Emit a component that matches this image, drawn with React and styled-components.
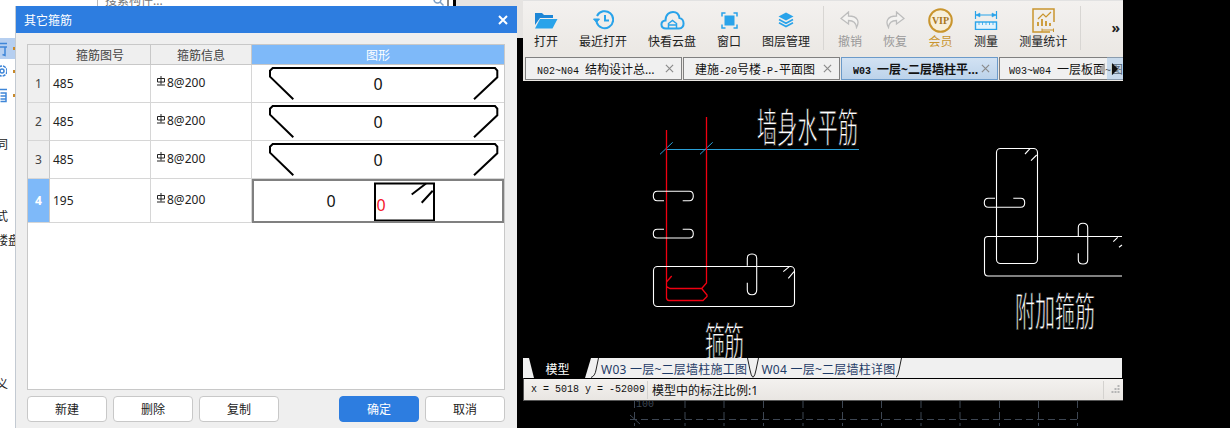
import React from 'react'
import styled, { createGlobalStyle } from 'styled-components'

const SANS = '"Noto Sans", "Noto Sans CJK SC", sans-serif'
const MONO = '"Liberation Mono", "Noto Sans CJK SC", monospace'
const BLUE = '#2d7de0'
const SKY = '#7eb9f9'
const ICON = '#29a3ea'
const GOLD = '#c9952e'

const GlobalStyle = createGlobalStyle`
  html, body {
    margin: 0;
    background: #000;
    overflow: hidden;
  }
  * {
    box-sizing: border-box;
  }
`

const Screen = styled.div`
  display: flex;
  width: 1230px;
  height: 428px;
  overflow: hidden;
  background: #000;
  font-family: ${SANS};
  font-size: 12px;
  color: #222;
`

/* left application behind the dialog */
const LeftPane = styled.div`
  position: relative;
  display: flex;
  flex: none;
  width: 523px;
  height: 428px;
`

const BackWindow = styled.div`
  width: 453px;
  height: 428px;
  margin-right: 3px;
  background: #fff;
  overflow: hidden;
`

const SearchRow = styled.div`
  height: 38px;
  padding-left: 97px;
  overflow: hidden;
`

const SearchBox = styled.div`
  display: flex;
  align-items: center;
  justify-content: space-between;
  width: 352px;
  height: 16px;
  margin-top: -8px;
  padding: 0 3px 0 7px;
  border: 1px solid #b9b9b9;
  border-right: 2px solid #888;
  color: #777;
`

const SideRow = styled.div`
  display: flex;
  align-items: center;
  gap: 6px;
  width: 15px;
  height: ${p => p.$h}px;
  overflow: hidden;
  background: ${p => (p.$active ? '#b6cff0' : 'transparent')};
`

const SideIcon = styled.svg`
  flex: none;
  margin-left: -9px;
`

const SideMark = styled.span`
  flex: none;
  width: 2px;
  height: 3px;
  background: #c98a2b;
`

const SideText = styled.span`
  flex: none;
  margin-left: -4px;
  color: #222;
`

const GrayStub = styled.div`
  width: 67px;
  height: 38px;
  background: #e6e4e2;
`

/* dialog */
const Dialog = styled.section`
  position: absolute;
  left: 15px;
  top: 6px;
  display: flex;
  flex-direction: column;
  width: 502px;
  height: 430px;
  border-left: 1px solid #c3cad2;
  background: #efefef;
`

const TitleBar = styled.header`
  display: flex;
  align-items: center;
  justify-content: space-between;
  flex: none;
  height: 27px;
  padding: 0 9px 0 8px;
  background: ${BLUE};
  color: #fff;
`

const DialogBody = styled.div`
  display: flex;
  flex-direction: column;
  gap: 6px;
  padding: 11px 12px 0 11px;
`

const Table = styled.div`
  width: 478px;
  height: 346px;
  border: 1px solid #c8c8c8;
  background: #fff;
`

const Row = styled.div`
  display: grid;
  grid-template-columns: 22px 101px 101px 252px;
  height: ${p => p.$h}px;
`

const HeadCell = styled.div`
  display: flex;
  align-items: center;
  justify-content: center;
  border-right: 1px solid #c8c8c8;
  border-bottom: 1px solid #c8c8c8;
  background: ${p => (p.$active ? SKY : '#efefef')};
  color: ${p => (p.$active ? '#fff' : '#444')};
  &:last-child {
    border-right: 0;
  }
`

const IndexCell = styled.div`
  display: flex;
  align-items: center;
  justify-content: center;
  border-right: 1px solid #c8c8c8;
  border-bottom: 1px solid #d6d6d6;
  background: ${p => (p.$active ? SKY : '#efefef')};
  color: ${p => (p.$active ? '#fff' : '#444')};
  font-weight: ${p => (p.$active ? 700 : 400)};
`

const TextCell = styled.div`
  display: flex;
  align-items: center;
  padding: 0 3px ${p => (p.$raised ? 2 : 0)}px 3px;
  border-right: 1px solid #d6d6d6;
  border-bottom: 1px solid #d6d6d6;
  color: #222;
`

const RebarGlyph = styled.svg`
  flex: none;
  margin: -4px 1px 0 2px;
`

const ShapeCell = styled.div`
  border-bottom: 1px solid #d6d6d6;
  outline: ${p => (p.$active ? '2px solid #808080' : 'none')};
  outline-offset: -2px;
  svg {
    display: block;
  }
`

const ShapeDigit = styled.text`
  font-family: ${SANS};
  font-size: 16px;
  fill: ${p => p.$fill || '#111'};
  text-anchor: middle;
`

const ButtonRow = styled.div`
  display: flex;
  gap: 6px;
`

const DialogButton = styled.button`
  width: 80px;
  height: 26px;
  margin-left: ${p => (p.$push ? '54px' : '0')};
  padding: 0;
  border: 1px solid ${p => (p.$primary ? BLUE : '#c8c8c8')};
  border-radius: 4px;
  background: ${p => (p.$primary ? BLUE : '#fff')};
  color: ${p => (p.$primary ? '#fff' : '#222')};
  font-family: ${SANS};
  font-size: 12px;
`

/* CAD viewer on the right */
const CadColumn = styled.div`
  display: flex;
  flex-direction: column;
  flex: none;
  width: 600px;
  height: 428px;
  svg {
    display: block;
    flex: none;
  }
`

const Toolbar = styled.div`
  display: flex;
  align-items: flex-start;
  gap: 21px;
  flex: none;
  height: 55px;
  padding: 5px 0 0 11px;
  border-top: 1px solid #e2e2e2;
  background: linear-gradient(#f3f1ef, #ebe8e4);
`

const ToolItem = styled.div`
  display: flex;
  flex-direction: column;
  align-items: center;
  color: ${p => p.$color || '#222'};
  white-space: nowrap;
`

const ToolIcon = styled.div`
  display: flex;
  align-items: center;
  justify-content: center;
  height: 28px;
`

const ToolLabel = styled.span`
  line-height: 16px;
`

const ToolDivider = styled.div`
  flex: none;
  width: 1px;
  height: 44px;
  margin: 0 -7px 0 -8px;
  background: #d8d6d3;
`

const MoreButton = styled.div`
  margin: 14px 3px 0 auto;
  font-size: 14px;
  font-weight: 700;
  line-height: 16px;
`

const TabStrip = styled.div`
  position: relative;
  display: flex;
  gap: 1px;
  flex: none;
  height: 26px;
  padding: 2px 0 1px 2px;
  background: #ebe8e4;
`

const DocTab = styled.div`
  display: flex;
  align-items: center;
  justify-content: space-between;
  flex: ${p => (p.$fill ? '1' : 'none')};
  width: ${p => (p.$fill ? 'auto' : '157px')};
  min-width: 0;
  padding: ${p => (p.$fill ? '0 0 0 9px' : '0 7px 0 11px')};
  border: 1px solid ${p => (p.$active ? '#6b9ac9' : '#808080')};
  border-width: ${p => (p.$fill ? '1px 0 1px 1px' : '1px')};
  background: ${p => (p.$active ? 'linear-gradient(#d2e2f3, #bcd3ea)' : '#f0f0f0')};
  font-weight: ${p => (p.$active ? 700 : 400)};
  overflow: hidden;
`

const DocTitle = styled.span`
  overflow: hidden;
  white-space: nowrap;
  color: #111;
`

const Latin = styled.span`
  font-family: ${MONO};
  font-size: 10px;
`

const TabClose = styled.svg`
  flex: none;
  color: #8a8a8a;
`

const ScrollArrow = styled.div`
  position: absolute;
  top: 2px;
  bottom: 1px;
  right: ${p => p.$right}px;
  width: ${p => p.$width}px;
  display: flex;
  align-items: center;
  justify-content: center;
  background: ${p => p.$bg || 'transparent'};
`

const Triangle = styled.i`
  display: block;
  width: 0;
  height: 0;
  border-top: 6px solid transparent;
  border-bottom: 6px solid transparent;
  border-left: ${p => (p.$dir === 'right' ? '6px solid #111' : '0')};
  border-right: ${p => (p.$dir === 'left' ? '6px solid #aaa' : '0')};
`

const SheetStrip = styled.div`
  display: flex;
  align-items: stretch;
  flex: none;
  width: 599px;
  height: 20px;
  background: #f0f0f0;
`

const ModelTab = styled.div`
  display: flex;
  align-items: center;
  justify-content: center;
  width: 67px;
  margin-left: 1px;
  padding-top: 1px;
  background: #000;
  color: #fff;
  clip-path: polygon(5px 0, 100% 0, calc(100% - 6px) 100%, 10px 100%);
`

const SheetTab = styled.div`
  display: flex;
  align-items: center;
  padding: 1px 0 0 2px;
  color: #1e3a66;
  letter-spacing: 0.25px;
  white-space: nowrap;
`

const SheetSlantIcon = styled.svg`
  transform: ${p => (p.$mirror ? 'scaleX(-1)' : 'none')};
`

const StatusBar = styled.div`
  display: flex;
  align-items: center;
  flex: none;
  height: 23px;
  padding: 0 3px 0 7px;
  border-top: 1px solid #000;
  border-bottom: 1px solid #555;
  border-left: 1px solid #555;
  background: linear-gradient(#f3f1ef, #e9e6e2);
  color: #111;
`

const Coordinates = styled.span`
  width: 116px;
  font-family: ${MONO};
  font-size: 10px;
  white-space: nowrap;
`

const StatusDivider = styled.div`
  flex: none;
  width: 1px;
  height: 18px;
  margin-right: ${p => p.$mr}px;
  background: #d4d2cf;
`

const StatusText = styled.span`
  flex: 1;
  white-space: nowrap;
`

/* black stroke painted over the white fill thins the glyphs to the CAD line weight */
const CadText = styled.text`
  font-family: "Noto Sans CJK SC", sans-serif;
  font-size: 20px;
  fill: #fff;
  stroke: #000;
  stroke-width: 0.45px;
`

const HOOK_ROWS = ['485', '485', '485']

function HookShape() {
  return (
    <path
      d="M41.3 34.3L18 11.7V5.7L20.7 3H243L245.3 5.7V12.3L222 34.3"
      fill="none"
      stroke="#000"
      strokeWidth="2"
    />
  )
}

function RebarSymbol() {
  return (
    <RebarGlyph width="10" height="10" viewBox="0 0 10 10" fill="none" stroke="#222" strokeWidth="1">
      <path d="M1.5 2.5H8.5V6H1.5ZM5 0V8.5M1 9H9" />
    </RebarGlyph>
  )
}

function CloseIcon({ size = 9, width = 1.3, color = 'currentColor' }) {
  return (
    <TabClose width={size} height={size} viewBox="0 0 10 10" stroke={color} strokeWidth={width}>
      <path d="M1 1L9 9M9 1L1 9" />
    </TabClose>
  )
}

function FolderIcon() {
  return (
    <svg width="24" height="17" viewBox="0 0 24 17">
      <path d="M1 1h7l2 2h9v3H6L1 13z" fill="#1d86d6" />
      <path d="M6 7h17.5l-5 9.5H1z" fill={ICON} />
    </svg>
  )
}

function RecentIcon() {
  return (
    <svg width="21" height="20" viewBox="0 0 21 20" fill="none" stroke={ICON} strokeWidth="2">
      <path d="M4 6A8.5 8.5 0 1 1 3.5 12" />
      <path d="M12 5V10.5H16" />
      <path d="M0.5 9H6.5L3.5 12.5Z" fill={ICON} strokeWidth="1" />
    </svg>
  )
}

function CloudIcon() {
  return (
    <svg width="25" height="19" viewBox="0 0 25 19" fill="none" stroke={ICON} strokeWidth="2">
      <path d="M6 17.5C0 17.5 0 9.5 5.5 9.5C5.5 3 10 1 13 1C16.5 1 19 3.5 19.5 7C24.5 7.5 25.5 17.5 19 17.5Z" />
      <path d="M8.5 17V12.5L12.5 9.5L16.5 12.5V17M8.5 14H16.5" strokeWidth="1.5" />
    </svg>
  )
}

function WindowIcon() {
  return (
    <svg width="17" height="17" viewBox="0 0 17 17" fill="none" stroke={ICON} strokeWidth="1.5">
      <rect x="3.5" y="3.5" width="10" height="10" fill={ICON} stroke="none" />
      <path d="M1 4.5V1H4.5M12.5 1H16V4.5M16 12.5V16H12.5M4.5 16H1V12.5" />
    </svg>
  )
}

function LayersIcon() {
  return (
    <svg width="16" height="17" viewBox="0 0 16 17">
      <path d="M8 0.5L15.5 4.5L8 8.5L0.5 4.5Z" fill={ICON} />
      <path d="M1 7.5L8 11.3L15 7.5M1 10.7L8 14.5L15 10.7" fill="none" stroke={ICON} strokeWidth="1.6" />
    </svg>
  )
}

function UndoIcon({ flip }) {
  return (
    <svg width="20" height="18" viewBox="0 0 20 18" style={flip ? { transform: 'scaleX(-1)' } : undefined}>
      <path
        d="M8.5 1L1 7.5L8.5 13V9.5C13 9.5 16 11 16.5 16.5C19.5 11 18.5 5 8.5 5Z"
        fill="#f4f3f1"
        stroke="#bdbdbd"
        strokeWidth="1.3"
      />
    </svg>
  )
}

function VipIcon() {
  return (
    <svg width="25" height="25" viewBox="0 0 25 25">
      <circle cx="12.5" cy="12.5" r="11.3" fill="#f7efd9" stroke={GOLD} strokeWidth="2" />
      <text x="12.5" y="16" textAnchor="middle" fontFamily="Liberation Serif, serif" fontSize="10" fontWeight="700" fill="#a9771c">
        VIP
      </text>
    </svg>
  )
}

function MeasureIcon() {
  return (
    <svg width="24" height="20" viewBox="0 0 24 20" fill="none" stroke={ICON}>
      <path d="M1.5 1V9M22.5 1V9M2 5H22" strokeWidth="1.2" />
      <path d="M2 5L6 3V7ZM22 5L18 3V7Z" fill={ICON} strokeWidth="0.5" />
      <rect x="1.5" y="12" width="21" height="7.5" fill="#e4f3fc" strokeWidth="1.4" />
      <path d="M5 12V15M8.5 12V15M12 12V15M15.5 12V15M19 12V15" strokeWidth="0.8" />
    </svg>
  )
}

function StatsIcon() {
  return (
    <svg width="23" height="25" viewBox="0 0 23 25" fill="none" stroke={GOLD}>
      <path d="M18 24H1V1H22V14" strokeWidth="1.5" />
      <path d="M6 11L11 6L14 9L19 4" strokeWidth="1.2" />
      <path d="M6 18V14M10 18V11M14 18V13M18 18V15" strokeWidth="1.8" />
      <path d="M10 20.5V24M21.5 20.5V24M10 22H21.5" strokeWidth="1" />
    </svg>
  )
}

function SheetSlant({ width = 6, mirror }) {
  return (
    <SheetSlantIcon $mirror={mirror} width={width} height="20" viewBox={`0 0 ${width} 20`} fill="none" stroke="#222" strokeWidth="1">
      <path d={`M${width - 0.5} 0L${width - 3} 12Q${width - 4} 18 0 19.5`} />
    </SheetSlantIcon>
  )
}

const tools = [
  { label: '打开', icon: <FolderIcon /> },
  { label: '最近打开', icon: <RecentIcon /> },
  { label: '快看云盘', icon: <CloudIcon /> },
  { label: '窗口', icon: <WindowIcon /> },
  { label: '图层管理', icon: <LayersIcon /> },
  { divider: true },
  { label: '撤销', icon: <UndoIcon />, color: '#999' },
  { label: '恢复', icon: <UndoIcon flip />, color: '#999' },
  { label: '会员', icon: <VipIcon />, color: GOLD },
  { label: '测量', icon: <MeasureIcon /> },
  { label: '测量统计', icon: <StatsIcon /> },
  { divider: true },
]

function CadDrawing() {
  return (
    <svg width="600" height="277" viewBox="523 81 600 277" fill="none">
      <path d="M667 149.5H859M660 154.3L672.7 142.3M700 154.3L712.7 142.3" stroke="#2a9fd6" />
      <path
        d="M666.5 130V298Q667 300.5 669 300.5H703L707 296.5V295L701.7 288.5H670L666.5 286.7M706.5 117V283L701.7 288.5M666.7 281.7L671.7 276"
        stroke="#f00011"
        strokeWidth="1.3"
      />
      <g stroke="#fff" strokeWidth="1.1">
        <path d="M664 200.7H657.3Q653.3 200.7 653.3 196Q653.3 191.3 657.3 191.3H689.3Q693.3 191.3 693.3 196Q693.3 200.7 689.3 200.7H682.7" />
        <path d="M664 229.3H657.3Q653.3 229.3 653.3 233.7Q653.3 238 657.3 238H689.3Q693.3 238 693.3 233.7Q693.3 229.3 689.3 229.3H682.7" />
        <rect x="653.5" y="266.5" width="141" height="40" rx="4" />
        <path d="M783.3 271.7L789.3 266.7M788.3 278.3L794 271.7" />
        <path d="M747.3 265.7V258.3Q747.3 254 752 254Q756.7 254 756.7 258.3V290Q756.7 294.7 752 294.7Q747.3 294.7 747.3 290V282.7" />
        <rect x="996.5" y="148.5" width="41" height="115" rx="4" />
        <path d="M1025 154L1030 148.7M1031 160.7L1036.7 155" />
        <path d="M995 198.3H988.3Q984.3 198.3 984.3 202.7Q984.3 207.3 988.3 207.3H1020.7Q1024.7 207.3 1024.7 202.7Q1024.7 198.3 1020.7 198.3H1013.3" />
        <path d="M1122 236.5H988Q984.5 236.5 984.5 240V272Q984.5 276 988 276H1122" />
        <path d="M1113.3 241.7L1117.7 237.3M1119 247.3L1122 245" />
        <path d="M1078.3 236.3V227.5Q1078.3 223.3 1083 223.3Q1087.7 223.3 1087.7 227.5V260Q1087.7 264 1083 264Q1078.3 264 1078.3 260V253.3" />
      </g>
      <CadText transform="translate(757 142) scale(1 2)" textLength="101">墙身水平筋</CadText>
      <CadText transform="translate(705 356) scale(1 2)" textLength="39">箍筋</CadText>
      <CadText transform="translate(1015 326) scale(1 2)" textLength="80">附加箍筋</CadText>
    </svg>
  )
}

function BelowGrid() {
  const verticals = [634.5, 685, 724, 763.5, 803, 842.5, 881.5, 921, 960, 999.5, 1038.5, 1077.5]
  return (
    <svg width="600" height="25" viewBox="523 403 600 25" fill="none">
      <g stroke="#3d4653" strokeDasharray="7 4">
        {verticals.map(x => (
          <path key={x} d={`M${x} 403V428`} />
        ))}
        <path d="M630 421.5H1077" />
      </g>
      <path d="M630 417L640 426" stroke="#3d4653" />
      <text x="636" y="409" fontFamily="Liberation Mono, monospace" fontSize="10" fill="#3d4653">100</text>
    </svg>
  )
}

export default function App() {
  return (
    <Screen>
      <GlobalStyle />
      <LeftPane>
        <BackWindow>
          <SearchRow>
            <SearchBox>
              <span>搜索构件...</span>
              <svg width="11" height="11" viewBox="0 0 11 11" fill="none" stroke="#7d9fc4" strokeWidth="1.5">
                <circle cx="4.5" cy="4.5" r="3.5" />
                <path d="M7 7L10.5 10.5" />
              </svg>
            </SearchBox>
          </SearchRow>
          <SideRow $h={21} $active>
            <SideIcon width="16" height="16" viewBox="0 0 16 16" fill="none" stroke="#3f86d8" strokeWidth="1.5">
              <path d="M9 2.5H16M9 6H16M14 6V14.5L11.5 13.5" />
            </SideIcon>
            <SideMark />
          </SideRow>
          <SideRow $h={24}>
            <SideIcon width="16" height="16" viewBox="0 0 16 16" fill="none" stroke="#3f86d8" strokeWidth="1.5">
              <circle cx="11" cy="8" r="5" strokeDasharray="3 1" />
              <circle cx="11" cy="8" r="2" />
            </SideIcon>
            <SideMark />
          </SideRow>
          <SideRow $h={24}>
            <SideIcon width="16" height="16" viewBox="0 0 16 16" fill="none" stroke="#3f86d8" strokeWidth="1.5">
              <path d="M9 2.5H16M9.5 6H15V14.5H9.5M9.5 9H15M9.5 12H15" />
            </SideIcon>
            <SideMark />
          </SideRow>
          <SideRow $h={25} />
          <SideRow $h={24}>
            <SideText>同</SideText>
          </SideRow>
          <SideRow $h={48} />
          <SideRow $h={24}>
            <SideText>式</SideText>
          </SideRow>
          <SideRow $h={24}>
            <SideText>楼盘</SideText>
          </SideRow>
          <SideRow $h={120} />
          <SideRow $h={24}>
            <SideText>义</SideText>
          </SideRow>
        </BackWindow>
        <GrayStub />

        <Dialog>
          <TitleBar>
            <span>其它箍筋</span>
            <CloseIcon size={10} width={2} color="#fff" />
          </TitleBar>
          <DialogBody>
            <Table>
              <Row $h={20}>
                <HeadCell />
                <HeadCell>箍筋图号</HeadCell>
                <HeadCell>箍筋信息</HeadCell>
                <HeadCell $active>图形</HeadCell>
              </Row>
              {HOOK_ROWS.map((code, i) => (
                <Row key={i} $h={38}>
                  <IndexCell>{i + 1}</IndexCell>
                  <TextCell>{code}</TextCell>
                  <TextCell $raised>
                    <RebarSymbol />8@200
                  </TextCell>
                  <ShapeCell>
                    <svg width="252" height="37" viewBox="0 0 252 37">
                      <HookShape />
                      <ShapeDigit x="126" y="25">0</ShapeDigit>
                    </svg>
                  </ShapeCell>
                </Row>
              ))}
              <Row $h={44}>
                <IndexCell $active>4</IndexCell>
                <TextCell>195</TextCell>
                <TextCell $raised>
                  <RebarSymbol />8@200
                </TextCell>
                <ShapeCell $active>
                  <svg width="252" height="43" viewBox="0 0 252 43" fill="none">
                    <ShapeDigit x="79" y="28">0</ShapeDigit>
                    <rect x="123" y="4.5" width="59" height="37" stroke="#000" strokeWidth="2" />
                    <path d="M159.7 15.5L174 4.5M169.7 23.7L180.7 11.7" stroke="#000" strokeWidth="2" />
                    <ShapeDigit x="129" y="32" $fill="#f5142a">0</ShapeDigit>
                  </svg>
                </ShapeCell>
              </Row>
            </Table>
            <ButtonRow>
              <DialogButton>新建</DialogButton>
              <DialogButton>删除</DialogButton>
              <DialogButton>复制</DialogButton>
              <DialogButton $primary $push>确定</DialogButton>
              <DialogButton>取消</DialogButton>
            </ButtonRow>
          </DialogBody>
        </Dialog>
      </LeftPane>

      <CadColumn>
        <Toolbar>
          {tools.map((tool, i) =>
            tool.divider ? (
              <ToolDivider key={i} />
            ) : (
              <ToolItem key={tool.label} $color={tool.color}>
                <ToolIcon>{tool.icon}</ToolIcon>
                <ToolLabel>{tool.label}</ToolLabel>
              </ToolItem>
            )
          )}
          <MoreButton>»</MoreButton>
        </Toolbar>
        <TabStrip>
          <DocTab>
            <DocTitle><Latin>N02~N04 </Latin>结构设计总…</DocTitle>
            <CloseIcon />
          </DocTab>
          <DocTab>
            <DocTitle>建施<Latin>-20</Latin>号楼<Latin>-P-</Latin>平面图</DocTitle>
            <CloseIcon />
          </DocTab>
          <DocTab $active>
            <DocTitle><Latin>W03 </Latin>一层~二层墙柱平…</DocTitle>
            <CloseIcon />
          </DocTab>
          <DocTab $fill>
            <DocTitle><Latin>W03~W04 </Latin>一层板面<Latin>~</Latin>图纸</DocTitle>
          </DocTab>
          <ScrollArrow $right={18} $width={6}>
            <Triangle $dir="left" />
          </ScrollArrow>
          <ScrollArrow $right={0} $width={16} $bg="rgba(150, 190, 230, 0.45)">
            <Triangle $dir="right" />
          </ScrollArrow>
        </TabStrip>
        <CadDrawing />
        <SheetStrip>
          <ModelTab>模型</ModelTab>
          <SheetSlant width={8} />
          <SheetTab>W03 一层~二层墙柱施工图</SheetTab>
          <SheetSlant mirror />
          <SheetSlant />
          <SheetTab>W04 一层~二层墙柱详图</SheetTab>
          <SheetSlant />
        </SheetStrip>
        <StatusBar>
          <Coordinates>x = 5018 y = -52009</Coordinates>
          <StatusDivider $mr={4} />
          <StatusText>模型中的标注比例:1</StatusText>
          <StatusDivider $mr={7} />
          <svg width="9" height="9" viewBox="0 0 9 9" fill="#b5b5b5">
            <path d="M6.5 0h2v2h-2zM3.5 3h2v2h-2zM6.5 3h2v2h-2zM0.5 6h2v2h-2zM3.5 6h2v2h-2zM6.5 6h2v2h-2z" />
          </svg>
        </StatusBar>
        <BelowGrid />
      </CadColumn>
    </Screen>
  )
}
